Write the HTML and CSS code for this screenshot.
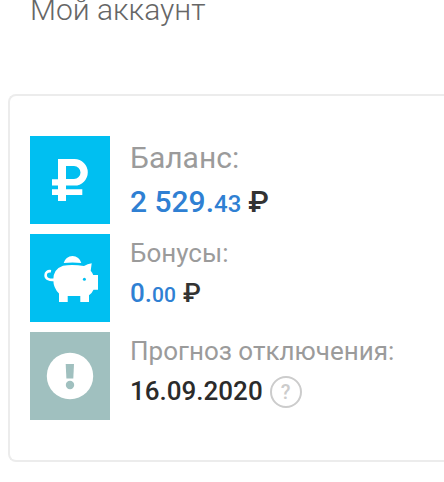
FILE: index.html
```html
<!DOCTYPE html>
<html lang="ru">

<head>
    <meta charset="UTF-8">
    <meta name="viewport" content="width=device-width, initial-scale=1.0">
    <title>Мой аккаунт</title>
    <link rel="stylesheet" href="styles.css">
</head>

<body>
    <h1 class="page-title">Мой аккаунт</h1>

    <div class="account-card">
        <!-- Balance -->
        <div class="account-row balance">
            <div class="tile">
                <svg width="80" height="88" viewBox="0 0 80 88">
                    <path fill="#fff" fill-rule="evenodd" d="M28 23h16.500a13.300 13.300 0 0 1 0 26.600H36v3.700h16.300v5.700H36v6h-8v-6h-6v-5.700h6v-3.700h-6v-6.300h6zM36 30v13h8a6.500 6.500 0 0 0 0-13z"/>
                </svg>
            </div>
            <div class="info">
                <div class="label">Баланс:</div>
                <div class="value"><span class="amount">2 529.<small>43</small></span> ₽</div>
            </div>
        </div>

        <!-- Bonuses -->
        <div class="account-row bonus">
            <div class="tile">
                <svg width="80" height="88" viewBox="0 0 80 88">
                    <path fill="#fff" d="M33.700 29a9 9 0 0 1 17.600 0q-8.800-1.200-17.600 0z"/>
                    <path fill="#fff" d="M33 31.700q9-1.500 21 .2 3.500-2 7.700-2.600l-1 7.500q1.700 2 2.500 4.200H68v14.700h-4.500q-1.500 3.500-4.500 5.500V68h-8.700v-6H37.700v6H29v-8.500q-5.700-5.500-5.700-14 0-10.500 9.700-13.800z"/>
                    <path fill="none" stroke="#fff" stroke-width="2.600" d="M25 45.700c-5.500.8-9.400-.7-9.400-4.500 0-2.800 2-4.500 5.400-4"/>
                    <circle cx="54.400" cy="45.300" r="1.500" fill="#00bff1"/>
                </svg>
            </div>
            <div class="info">
                <div class="label">Бонусы:</div>
                <div class="value"><span class="amount">0.<small>00</small></span> ₽</div>
            </div>
        </div>

        <!-- Disconnection forecast -->
        <div class="account-row forecast">
            <div class="tile">
                <svg width="80" height="88" viewBox="0 0 80 88">
                    <circle cx="40" cy="44" r="23.200" fill="#fff"/>
                    <path fill="#a0c0bf" d="M35.700 32h8.300l-.7 14.500h-6.900z"/>
                    <circle cx="40" cy="53" r="4.200" fill="#a0c0bf"/>
                </svg>
            </div>
            <div class="info">
                <div class="label">Прогноз отключения:</div>
                <div class="value">16.09.2020 <span class="help">?</span></div>
            </div>
        </div>
    </div>
</body>

</html>
```

FILE: styles.css
```css
body {
    margin: 0;
    background-color: #fff;
    font-family: Roboto, "Liberation Sans", sans-serif;
}

.page-title {
    margin: -8px 0 0 30px;
    font-size: 30px;
    font-weight: 300;
    line-height: 36px;
    color: #666;
}

/* Open on the right side, the card goes up to the edge */
.account-card {
    display: flex;
    flex-direction: column;
    gap: 10px;
    margin: 66px 0 0 8px;
    padding: 40px 20px;
    border: 2px solid #ececec;
    border-right: none;
    border-radius: 8px 0 0 8px;
}

.account-row {
    display: flex;
    gap: 20px;
    height: 88px;
    font-size: 26px;
}

.tile {
    width: 80px;
    height: 88px;
    background-color: #00bff1;
}

.tile svg {
    display: block;
}

.forecast .tile {
    background-color: #a0c0bf;
}

.info {
    white-space: nowrap;
}

.label {
    line-height: 38px;
    color: #9b9b9b;
}

.value {
    display: flex;
    align-items: baseline;
    gap: 7px;
    line-height: 42px;
    font-weight: 500;
    color: #333;
}

.amount {
    color: #2f80d3;
}

.amount small {
    font-size: 21px;
}

/* Balance is set larger than the other rows */
.balance {
    font-size: 30px;
}

.balance .label,
.balance .value {
    line-height: 44px;
}

.balance .amount small {
    font-size: 24px;
}

.forecast .value {
    align-items: center;
    color: #2b2b2b;
}

.help {
    width: 32px;
    height: 32px;
    box-sizing: border-box;
    margin-top: 1px;
    border: 2px solid #ccc;
    border-radius: 50%;
    font-size: 20px;
    line-height: 29px;
    text-align: center;
    color: #ccc;
}
```
